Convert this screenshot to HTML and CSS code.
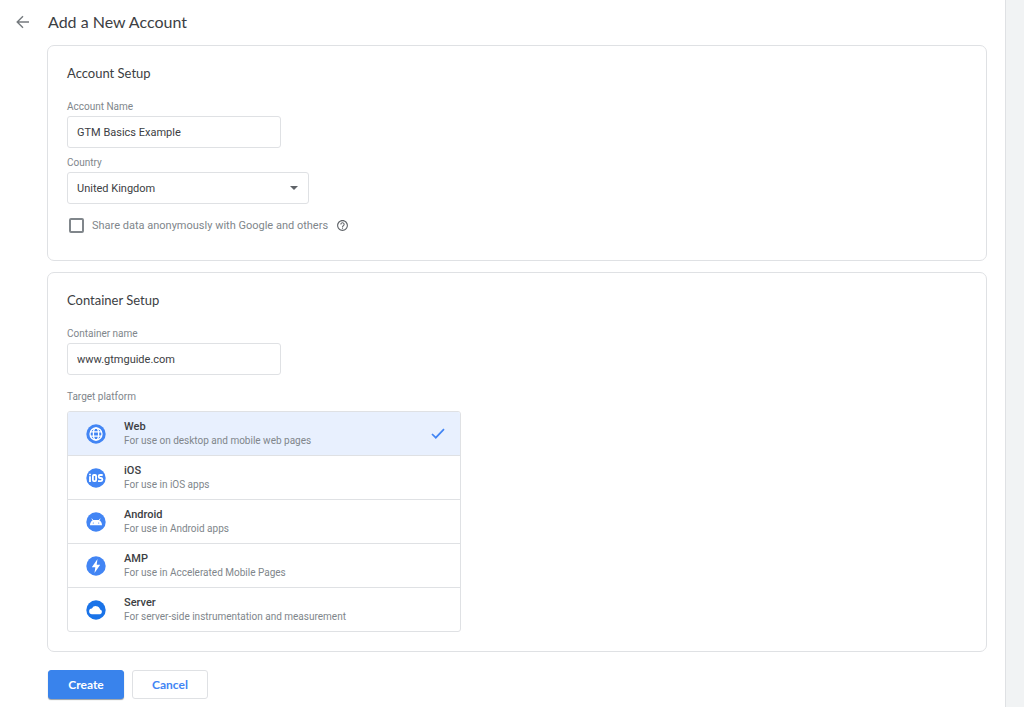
FILE: index.html
```html
<!DOCTYPE html>
<html lang="en">
<head>
<meta charset="utf-8">
<meta name="viewport" content="width=device-width, initial-scale=1">
<title>Add a New Account</title>
<link rel="stylesheet" href="styles.css">
</head>
<body>
<div class="sheet">
  <header class="topbar">
    <button class="back" type="button" aria-label="Back">
      <svg viewBox="0 0 14 14" width="14" height="14"><path d="M13 7H1.500M7 1.200L1.200 7L7 12.800" fill="none" stroke="currentColor" stroke-width="1.400"/></svg>
    </button>
    <h1 class="title">Add a New Account</h1>
  </header>
  <form class="form">
    <section class="card card-account">
      <h2 class="card-title">Account Setup</h2>
      <div class="field">
        <label class="label" for="account">Account Name</label>
        <input class="input" id="account" type="text" value="GTM Basics Example">
      </div>
      <div class="field">
        <label class="label" for="country">Country</label>
        <span class="select-wrap">
          <select class="input select" id="country"><option>United Kingdom</option></select>
          <svg class="caret" viewBox="0 0 8 4" width="8" height="4"><path d="M0 0h8L4 4z" fill="currentColor"/></svg>
        </span>
      </div>
      <div class="share">
        <input class="checkbox" id="share" type="checkbox">
        <label for="share">Share data anonymously with Google and others</label>
        <button class="help" type="button" aria-label="Help">
          <svg viewBox="0 0 24 24" width="13" height="13"><path fill="currentColor" d="M11 18h2v-2h-2v2zm1-16C6.480 2 2 6.480 2 12s4.480 10 10 10 10-4.480 10-10S17.520 2 12 2zm0 18c-4.410 0-8-3.590-8-8s3.590-8 8-8 8 3.590 8 8-3.590 8-8 8zm0-14c-2.210 0-4 1.790-4 4h2c0-1.100.9-2 2-2s2 .9 2 2c0 2-3 1.750-3 5h2c0-2.250 3-2.500 3-5 0-2.210-1.790-4-4-4z"/></svg>
        </button>
      </div>
    </section>

    <section class="card">
      <h2 class="card-title">Container Setup</h2>
      <div class="field">
        <label class="label" for="container">Container name</label>
        <input class="input" id="container" type="text" value="www.gtmguide.com">
      </div>
      <fieldset class="platforms">
        <legend class="label legend">Target platform</legend>
        <div class="list">
          <label class="platform">
            <input class="radio" type="radio" name="platform" checked>
            <svg class="logo" viewBox="0 0 20 20" width="20" height="20"><circle cx="10" cy="10" r="9.700" fill="#4285f4"/><g fill="none" stroke="#fff" stroke-width="1.300"><circle cx="10" cy="10" r="6"/><ellipse cx="10" cy="10" rx="2.600" ry="6"/><path d="M4.500 7.800h11M4.500 12.200h11"/></g></svg>
            <span class="text"><span class="name">Web</span><span class="desc">For use on desktop and mobile web pages</span></span>
            <svg class="tick" viewBox="0 0 14 11" width="14" height="11"><path d="M1 6l3.800 3.700L13 1.200" fill="none" stroke="currentColor" stroke-width="1.700"/></svg>
          </label>
          <label class="platform">
            <input class="radio" type="radio" name="platform">
            <svg class="logo" viewBox="0 0 20 20" width="20" height="20"><circle cx="10" cy="10" r="9.700" fill="#4285f4"/><g fill="none" stroke="#fff" stroke-width="1.800"><path d="M4 8.300v5.700M4 5.800v1.500"/><rect x="6.900" y="7" width="3.200" height="6.100" rx="1"/><path d="M16.700 7h-2.700q-1.300 0-1.300 1.400t1.300 1.600h1q1.400.2 1.400 1.600t-1.400 1.500H12"/></g></svg>
            <span class="text"><span class="name">iOS</span><span class="desc">For use in iOS apps</span></span>
            <svg class="tick" viewBox="0 0 14 11" width="14" height="11"><path d="M1 6l3.800 3.700L13 1.200" fill="none" stroke="currentColor" stroke-width="1.700"/></svg>
          </label>
          <label class="platform">
            <input class="radio" type="radio" name="platform">
            <svg class="logo" viewBox="0 0 20 20" width="20" height="20"><circle cx="10" cy="10" r="9.700" fill="#4285f4"/><path d="M4 13.300c0-2.400 1.200-4.300 3.200-5.200h5.600c2 .9 3.200 2.800 3.200 5.200z" fill="#fff"/><path d="M5.800 6.700l1.400 2M14.200 6.700l-1.400 2" stroke="#fff" stroke-width=".9"/><circle cx="7.300" cy="11" r=".6" fill="#4285f4"/><circle cx="12.700" cy="11" r=".6" fill="#4285f4"/></svg>
            <span class="text"><span class="name">Android</span><span class="desc">For use in Android apps</span></span>
            <svg class="tick" viewBox="0 0 14 11" width="14" height="11"><path d="M1 6l3.800 3.700L13 1.200" fill="none" stroke="currentColor" stroke-width="1.700"/></svg>
          </label>
          <label class="platform">
            <input class="radio" type="radio" name="platform">
            <svg class="logo" viewBox="0 0 20 20" width="20" height="20"><circle cx="10" cy="10" r="9.700" fill="#4285f4"/><path d="M11.500 3L5.800 11.200h3.500L8.500 17 14.200 8.700h-3.500z" fill="#fff"/></svg>
            <span class="text"><span class="name">AMP</span><span class="desc">For use in Accelerated Mobile Pages</span></span>
            <svg class="tick" viewBox="0 0 14 11" width="14" height="11"><path d="M1 6l3.800 3.700L13 1.200" fill="none" stroke="currentColor" stroke-width="1.700"/></svg>
          </label>
          <label class="platform">
            <input class="radio" type="radio" name="platform">
            <svg class="logo" viewBox="0 0 20 20" width="20" height="20"><circle cx="10" cy="10" r="9.700" fill="#1a73e8"/><path d="M6.200 14.300a2.900 2.900 0 0 1-.3-5.800 4.400 4.400 0 0 1 8.200 1A2.500 2.500 0 0 1 14.200 14.300z" fill="#fff"/></svg>
            <span class="text"><span class="name">Server</span><span class="desc">For server-side instrumentation and measurement</span></span>
            <svg class="tick" viewBox="0 0 14 11" width="14" height="11"><path d="M1 6l3.800 3.700L13 1.200" fill="none" stroke="currentColor" stroke-width="1.700"/></svg>
          </label>
        </div>
      </fieldset>
    </section>

    <div class="actions">
      <button class="btn btn-primary" type="button">Create</button>
      <button class="btn btn-plain" type="button">Cancel</button>
    </div>
  </form>
</div>
</body>
</html>
```
FILE: styles.css
```css
* {
  box-sizing: border-box;
}

body {
  margin: 0;
  padding-right: 18px;
  background: #f1f3f4;
  color: #3c4043;
  font-family: Roboto, "Liberation Sans", sans-serif;
  font-size: 11px;
}

button,
input,
select {
  font: inherit;
  color: inherit;
}

.sheet {
  min-height: 100vh;
  background: #fff;
  border-right: 1px solid #dfe1e4;
}

.topbar {
  display: flex;
  align-items: center;
  gap: 17px;
  height: 45px;
  padding: 0 15px 2px;
}

.back,
.help {
  display: flex;
  padding: 0;
  border: 0;
  background: none;
}

.back {
  padding: 1px;
  color: #757a7e;
}

.title {
  margin: 0;
  font-size: 16px;
  font-weight: 400;
  font-family: Lato, Roboto, sans-serif;
}

.form {
  display: flex;
  flex-direction: column;
  gap: 11px;
  padding: 0 18px 8px 47px;
}

.card {
  padding: 17px 19px 19px;
  border: 1px solid #dfe1e4;
  border-radius: 7px;
}

.card-account {
  padding-bottom: 27px;
}

.card-title {
  margin: 0 0 18px;
  font-family: Lato, Roboto, sans-serif;
  font-size: 13px;
  font-weight: 400;
  line-height: 20px;
}

.field {
  display: flex;
  flex-direction: column;
  align-items: flex-start;
  margin-bottom: 9px;
}

.label {
  padding: 0;
  color: #80868b;
  font-size: 10px;
  line-height: 12px;
  margin-bottom: 3px;
}

.input {
  width: 214px;
  height: 32px;
  padding: 0 9px;
  border: 1px solid #dfe1e4;
  border-radius: 3px;
  background: #fff;
}

.select-wrap {
  position: relative;
}

.select {
  display: block;
  width: 242px;
  appearance: none;
}

.caret {
  position: absolute;
  top: 14px;
  right: 11px;
  color: #5f6368;
  pointer-events: none;
}

.share {
  display: flex;
  align-items: center;
  gap: 8px;
  margin-top: 14px;
  padding-left: 2px;
  color: #80868b;
  line-height: 15px;
}

.checkbox {
  width: 15px;
  height: 15px;
  margin: 0;
  border: 2px solid #80868b;
  border-radius: 2px;
  appearance: none;
}

.checkbox:checked {
  border-color: #1a73e8;
  background: #1a73e8;
}

.help {
  color: #5f6368;
}

.platforms {
  min-width: 0;
  margin: 16px 0 0;
  padding: 0;
  border: 0;
}

.legend {
  margin-bottom: 8px;
}

.list {
  max-width: 394px;
  overflow: hidden;
  border: 1px solid #dfe1e4;
  border-radius: 3px;
}

.platform {
  display: flex;
  align-items: center;
  height: 43px;
  padding: 0 15px 0 18px;
}

.platform + .platform {
  height: 44px;
  border-top: 1px solid #dfe1e4;
}

.platform:has(.radio:checked) {
  background: #e8f0fe;
}

.radio {
  width: 0;
  height: 0;
  margin: 0;
  appearance: none;
}

.text {
  display: flex;
  flex: 1;
  flex-direction: column;
  margin-left: 18px;
}

.name {
  font-weight: 500;
  line-height: 14px;
}

.desc {
  color: #80868b;
  font-size: 10px;
  line-height: 14px;
}

.tick {
  display: none;
  color: #4285f4;
}

.radio:checked ~ .tick {
  display: block;
}

.actions {
  display: flex;
  gap: 8px;
  padding: 7px 0 0 1px;
}

.btn {
  width: 76px;
  height: 29px;
  padding: 0;
  border: 1px solid #dfe1e4;
  border-radius: 3px;
  background: #fff;
  color: #4285f4;
  font-family: Lato, Roboto, sans-serif;
  font-size: 12px;
  font-weight: 700;
}

.btn-primary {
  border-color: #3983ec;
  background: #3983ec;
  color: #fff;
  box-shadow: 0 1px 1px #9aa0a6;
}
```
